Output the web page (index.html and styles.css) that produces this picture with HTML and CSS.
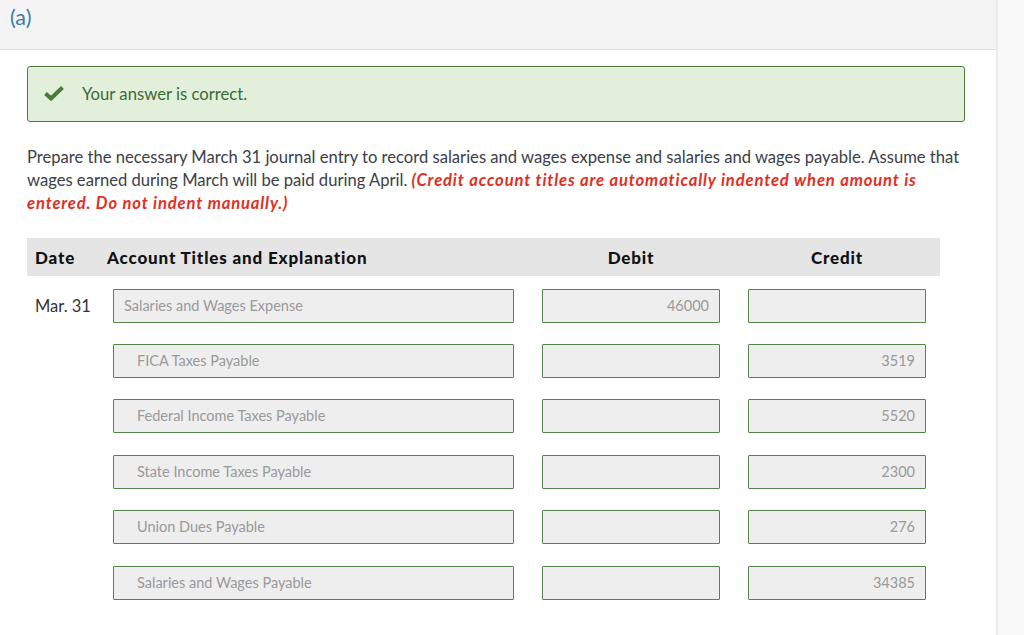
FILE: index.html
```html
<!DOCTYPE html>
<html lang="en">
<head>
<meta charset="utf-8">
<title>Journal entry</title>
<link rel="stylesheet" href="styles.css">
</head>
<body>
<div class="page">
  <main class="main">
    <header class="part-header"><span class="part-label">(a)</span></header>
    <section class="content">
      <div class="success">
        <svg class="check" viewBox="0 0 20 16" width="20" height="16" aria-hidden="true">
          <path d="M1.5 8.5 L7 13.5 L18.5 2.5" fill="none" stroke="#4a7b3c" stroke-width="4" stroke-linejoin="miter"/>
        </svg>
        <span class="success-text">Your answer is correct.</span>
      </div>
      <p class="question">Prepare the necessary March 31 journal entry to record salaries and wages expense and salaries and wages payable. Assume that wages earned during March will be paid during April. <em class="note">(Credit account titles are automatically indented when amount is entered. Do not indent manually.)</em></p>

      <div class="journal">
        <div class="jhead">
          <div class="h-date">Date</div>
          <div class="h-acct">Account Titles and Explanation</div>
          <div class="h-num">Debit</div>
          <div class="h-num">Credit</div>
        </div>
        <div class="jrow">
          <div class="c-date">Mar. 31</div>
          <div class="c-acct"><div class="field">Salaries and Wages Expense</div></div>
          <div class="c-num"><div class="field num">46000</div></div>
          <div class="c-num"><div class="field num"></div></div>
        </div>
        <div class="jrow">
          <div class="c-date"></div>
          <div class="c-acct"><div class="field indent">FICA Taxes Payable</div></div>
          <div class="c-num"><div class="field num"></div></div>
          <div class="c-num"><div class="field num">3519</div></div>
        </div>
        <div class="jrow">
          <div class="c-date"></div>
          <div class="c-acct"><div class="field indent">Federal Income Taxes Payable</div></div>
          <div class="c-num"><div class="field num"></div></div>
          <div class="c-num"><div class="field num">5520</div></div>
        </div>
        <div class="jrow">
          <div class="c-date"></div>
          <div class="c-acct"><div class="field indent">State Income Taxes Payable</div></div>
          <div class="c-num"><div class="field num"></div></div>
          <div class="c-num"><div class="field num">2300</div></div>
        </div>
        <div class="jrow">
          <div class="c-date"></div>
          <div class="c-acct"><div class="field indent">Union Dues Payable</div></div>
          <div class="c-num"><div class="field num"></div></div>
          <div class="c-num"><div class="field num">276</div></div>
        </div>
        <div class="jrow">
          <div class="c-date"></div>
          <div class="c-acct"><div class="field indent">Salaries and Wages Payable</div></div>
          <div class="c-num"><div class="field num"></div></div>
          <div class="c-num"><div class="field num">34385</div></div>
        </div>
      </div>
    </section>
  </main>
  <aside class="side"></aside>
</div>
</body>
</html>
```

FILE: styles.css
```css
* { box-sizing: border-box; }
html, body { margin: 0; padding: 0; }
body {
  font-family: Lato, "Open Sans", "Liberation Sans", sans-serif;
  color: #333;
  background: #fff;
  width: 1024px;
  height: 635px;
  overflow: hidden;
}
.page {
  display: flex;
  height: 635px;
}
.main {
  width: 996px;
  flex: none;
}
.side {
  flex: 1;
  background: #f9f9f9;
  border-left: 2px solid #ececec;
}
.part-header {
  height: 50px;
  background: #f4f4f4;
  border-bottom: 1px solid #dcdcdc;
  padding: 4px 0 0 10px;
}
.part-label {
  font-size: 21.5px;
  color: #3b7ab3;
  line-height: 26px;
}
.content {
  padding: 16px 31px 0 27px;
}
.success {
  display: flex;
  align-items: center;
  height: 56px;
  background: #e2efdb;
  border: 1px solid #4a7b3c;
  border-radius: 3px;
  padding-left: 16px;
}
.check {
  width: 20px;
  height: 16px;
  margin-right: 18px;
  margin-top: -2px;
}
.success-text {
  font-size: 16.7px;
  color: #3e6a33;
  margin-top: -1px;
}
.question {
  margin: 24px 0 0 0;
  font-size: 16.6px;
  line-height: 23px;
  color: #3b4049;
}
.note {
  color: #e32e22;
  font-weight: bold;
  font-style: italic;
  letter-spacing: 0.85px;
}
.journal {
  margin-top: 23px;
  width: 913px;
}
.jhead {
  display: grid;
  grid-template-columns: 80px 421px 206px 206px;
  height: 38px;
  align-items: center;
  background: #e5e5e5;
  font-weight: 900;
  font-size: 17px;
  letter-spacing: 0.85px;
  color: #111;
}
.h-date { padding-left: 8px; }
.h-num { text-align: center; }
.jrow {
  display: grid;
  grid-template-columns: 80px 421px 206px 206px;
  align-items: center;
  height: 55.4px;
}
.jhead + .jrow { margin-top: 2px; }
.c-date {
  padding-left: 8px;
  font-size: 16.5px;
  color: #333;
}
.c-acct { padding: 0 14px 0 6px; }
.c-num { padding: 0 14px; }
.field {
  height: 34px;
  background: #eeeeee;
  border: 1px solid #55844a;
  border-radius: 1px;
  font-size: 14.5px;
  color: #999;
  line-height: 32px;
  padding: 0 10px;
  white-space: nowrap;
}
.field.indent { padding-left: 23px; }
.field.num { text-align: right; }
```
